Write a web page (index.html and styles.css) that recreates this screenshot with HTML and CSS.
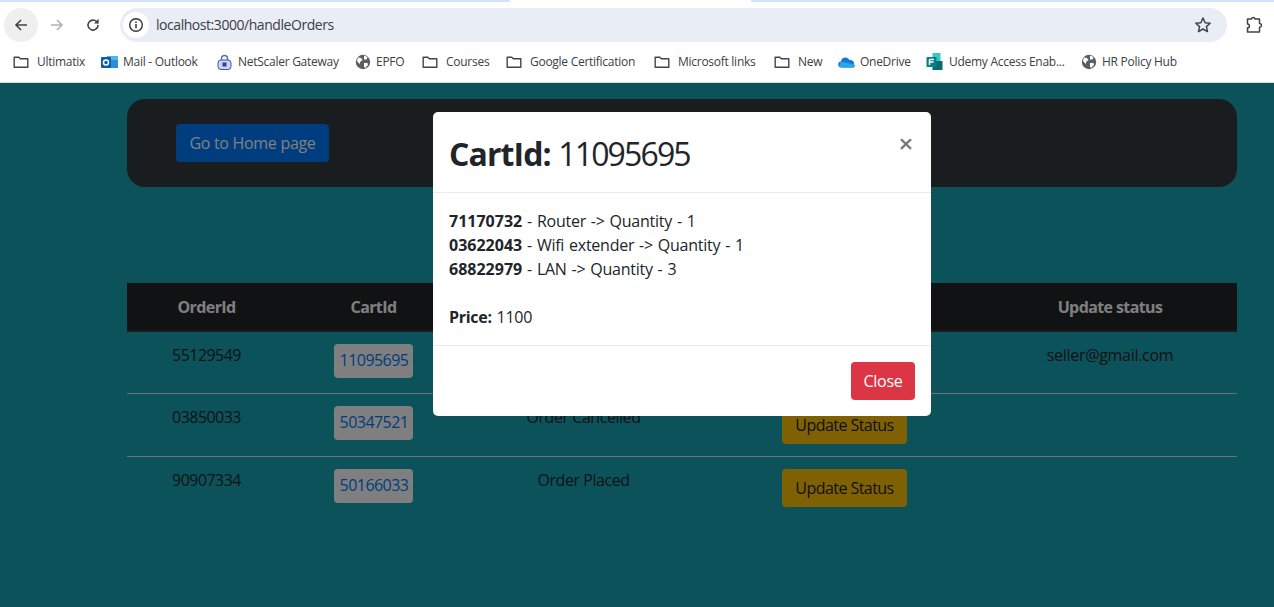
FILE: index.html
```html
<!DOCTYPE html>
<html>
	<head>
		<meta charset="UTF-8">
		<title>handleOrders</title>
		<link rel="stylesheet" href="styles.css">
	</head>
	<body>
		<svg class="defs" width="0" height="0">
			<symbol id="folder" viewBox="0 0 16 16">
				<path d="M1.2 3.2h4.6l1.6 1.6h7.4v8.4H1.2z" fill="none" stroke="#444" stroke-width="1.4" stroke-linejoin="round"/>
			</symbol>
			<symbol id="globe" viewBox="0 0 16 16">
				<circle cx="8" cy="8" r="7.2" fill="#5b5e63"/>
				<path d="M3 3.5l3 .5 1.5 2-2 1.5-1 2.5-2.5-3zM9 1.5l3.5 1.5-1 2.5H9zM9 9l3.5 0 .5 2-3 3-1-1.5z" fill="#fff"/>
			</symbol>
		</svg>

		<!--browser toolbar-->
		<div class="tabstrip"><span class="tabgap"></span></div>
		<div class="toolbar">
			<span class="navbtn navbtn-on">
				<svg width="16" height="16" viewBox="0 0 16 16"><path d="M14 8H3M8 3L3 8l5 5" fill="none" stroke="#444" stroke-width="1.6"/></svg>
			</span>
			<span class="navbtn">
				<svg width="16" height="16" viewBox="0 0 16 16"><path d="M2 8h11M8 3l5 5-5 5" fill="none" stroke="#b0b2b5" stroke-width="1.6"/></svg>
			</span>
			<span class="navbtn">
				<svg width="16" height="16" viewBox="0 0 16 16"><path d="M13 8a5 5 0 1 1-1.5-3.5L13 6" fill="none" stroke="#444" stroke-width="1.6"/><path d="M13.6 1.8v4.6H9z" fill="#444"/></svg>
			</span>
			<div class="omnibox">
				<span class="siteinfo">
					<svg width="16" height="16" viewBox="0 0 16 16"><circle cx="8" cy="8" r="6.3" fill="none" stroke="#333" stroke-width="1.4"/><path d="M8 7v4.2M8 4.6v1.4" stroke="#333" stroke-width="1.5"/></svg>
				</span>
				<span class="url">localhost:3000/handleOrders</span>
				<svg class="star" width="18" height="18" viewBox="0 0 18 18"><path d="M9 2l2.1 4.7 5.1.5-3.8 3.4 1.1 5L9 13l-4.5 2.6 1.1-5-3.8-3.4 5.1-.5z" fill="none" stroke="#444" stroke-width="1.5" stroke-linejoin="round"/></svg>
			</div>
			<svg class="puzzle" width="18" height="18" viewBox="0 0 18 18"><path d="M3.5 3H7.5a1.800 1.800 0 0 1 3.500 0H15.500v4.500a1.800 1.800 0 0 1 0 3.800V16H3.500v-4.200a1.900 1.900 0 0 0 0-3.800z" fill="none" stroke="#444" stroke-width="1.5" stroke-linejoin="round"/></svg>
		</div>

		<!--bookmarks-->
		<div class="bookmarks">
			<a class="mark m88"><svg width="16" height="16"><use href="#folder"/></svg>Ultimatix</a>
			<a class="mark m115 tight"><svg width="17" height="16" viewBox="0 0 17 16"><rect x="6" y="2" width="11" height="12" fill="#2a8fd8"/><rect x="6" y="2" width="11" height="4" fill="#50b4ee"/><rect x="0" y="3" width="10" height="11" rx="1" fill="#0c5fb0"/><circle cx="5" cy="8.500" r="2.500" fill="none" stroke="#fff" stroke-width="1.500"/></svg>Mail - Outlook</a>
			<a class="mark m139 tight"><svg width="17" height="16" viewBox="0 0 16 16"><path d="M5 7V4.500a3 3 0 0 1 6 0V7" fill="none" stroke="#5a6fb5" stroke-width="1.500"/><rect x="1.500" y="6" width="13" height="9.500" rx="3" fill="#c8d4f0" stroke="#3f56a3"/><rect x="6" y="8.500" width="4" height="4" fill="#2d4391"/></svg>NetScaler Gateway</a>
			<a class="mark m67 tight"><svg width="16" height="16"><use href="#globe"/></svg>EPFO</a>
			<a class="mark m84"><svg width="16" height="16"><use href="#folder"/></svg>Courses</a>
			<a class="mark m148"><svg width="16" height="16"><use href="#folder"/></svg>Google Certification</a>
			<a class="mark m120"><svg width="16" height="16"><use href="#folder"/></svg>Microsoft links</a>
			<a class="mark m64"><svg width="16" height="16"><use href="#folder"/></svg>New</a>
			<a class="mark m88 tight"><svg width="17" height="16" viewBox="0 0 17 16"><path d="M3.500 13.500a3 3 0 0 1-.5-6 4.500 4.500 0 0 1 8.500-1.500 3.800 3.800 0 0 1 4.500 4.500 2 2 0 0 1-.5 3z" fill="#1479d4"/><path d="M3.500 13.500a3 3 0 0 1 1-5.800L16 10.500a2 2 0 0 1-.5 3z" fill="#2ba4ec"/></svg>OneDrive</a>
			<a class="mark m155 tight"><svg width="18" height="18" viewBox="0 0 17 18"><rect x="6" y="0" width="8" height="8" fill="#37c6d0"/><rect x="6" y="8" width="10" height="9" fill="#0b6a70"/><rect x="0" y="4" width="10" height="10" rx="1" fill="#038387"/><path d="M3 6.500h4.500M3 9h4M3 6.500V12" stroke="#fff" stroke-width="1.500" fill="none"/></svg>Udemy Access Enab...</a>
			<a class="mark tight"><svg width="16" height="16"><use href="#globe"/></svg>HR Policy Hub</a>
		</div>

		<!--the app-->
		<div class="page">
			<div class="container">
				<div class="topnav">
					<button class="btn btn-home">Go to Home page</button>
				</div>
				<table class="orders">
					<colgroup>
						<col class="c1"><col class="c2"><col class="c3"><col class="c4"><col class="c5">
					</colgroup>
					<thead>
						<tr>
							<th>OrderId</th>
							<th>CartId</th>
							<th>Status</th>
							<th>Action</th>
							<th>Update status</th>
						</tr>
					</thead>
					<tbody>
						<tr>
							<td class="num">55129549</td>
							<td><a class="cartlink">11095695</a></td>
							<td class="status">Order Shipped</td>
							<td></td>
							<td>seller@gmail.com</td>
						</tr>
						<tr>
							<td class="num">03850033</td>
							<td><a class="cartlink">50347521</a></td>
							<td class="status">Order Cancelled</td>
							<td><button class="btn btn-update">Update Status</button></td>
							<td></td>
						</tr>
						<tr>
							<td class="num">90907334</td>
							<td><a class="cartlink">50166033</a></td>
							<td class="status">Order Placed</td>
							<td><button class="btn btn-update">Update Status</button></td>
							<td></td>
						</tr>
					</tbody>
				</table>
			</div>

			<!--modal-->
			<div class="backdrop">
				<div class="modal">
					<div class="modal-head">
						<h1><b>CartId:</b> <span class="cartno">11095695</span></h1>
						<span class="close">&times;</span>
					</div>
					<div class="modal-body">
						<b>71170732</b> - Router -&gt; Quantity - 1<br>
						<b>03622043</b> - Wifi extender -&gt; Quantity - 1<br>
						<b>68822979</b> - LAN -&gt; Quantity - 3<br>
						<br>
						<b class="price">Price:</b> 1100
					</div>
					<div class="modal-foot">
						<button class="btn btn-close">Close</button>
					</div>
				</div>
			</div>
		</div>
	</body>
</html>
```

FILE: styles.css
```css
* {
	margin: 0;
	padding: 0;
	box-sizing: border-box;
}
html, body {
	height: 100%;
	overflow: hidden;
}
body {
	display: flex;
	flex-direction: column;
	font-family: "Open Sans", "Noto Sans", sans-serif;
	font-size: 16px;
	line-height: 24px;
	letter-spacing: -0.3px;
	color: #212529;
	background: #fff;
}
.defs {
	position: absolute;
}
/*browser chrome*/
.tabstrip {
	height: 2px;
	flex: none;
	background: #d3e3fd;
	display: flex;
	padding-left: 510px;
}
.tabgap {
	width: 241px;
	background: #fff;
}
.toolbar {
	height: 40px;
	flex: none;
	padding: 6px 0 0 4px;
	display: flex;
	align-items: flex-start;
	background: #fff;
}
.navbtn {
	width: 34px;
	height: 34px;
	border-radius: 50%;
	margin-right: 2px;
	display: flex;
	align-items: center;
	justify-content: center;
}
.navbtn-on {
	background: #efefef;
}
.omnibox {
	width: 1107px;
	height: 34px;
	margin-left: 8px;
	border-radius: 17px;
	background: #e9edf6;
	display: flex;
	align-items: center;
	padding: 0 15px 0 3px;
}
.siteinfo {
	width: 26px;
	height: 26px;
	border-radius: 50%;
	background: #fff;
	display: flex;
	align-items: center;
	justify-content: center;
	margin-right: 7px;
}
.url {
	flex: 1;
	font-size: 14px;
	letter-spacing: -0.45px;
	color: #3c4043;
}
.puzzle {
	margin: 8px 0 0 17px;
}
.bookmarks {
	height: 41px;
	flex: none;
	display: flex;
	align-items: flex-start;
	padding: 11px 0 0 13px;
	font-size: 12px;
	line-height: 18px;
	letter-spacing: -0.27px;
	color: #3c4043;
	background: #fff;
	border-bottom: 1px solid #d8dade;
}
.mark {
	display: flex;
	align-items: center;
	gap: 8px;
	flex: none;
	white-space: nowrap;
}
.tight {
	gap: 5px;
}
.m64 { width: 64px; }
.m67 { width: 67px; }
.m84 { width: 84px; }
.m88 { width: 88px; }
.m115 { width: 115px; }
.m120 { width: 120px; }
.m139 { width: 139px; }
.m148 { width: 148px; }
.m155 { width: 155px; }

/*page*/
.page {
	flex: 1;
	position: relative;
	background: #16a4b6;
	padding: 16px 0 0 127px;
}
.container {
	width: 1110px;
}
.topnav {
	height: 88px;
	margin-bottom: 96px;
	padding: 25px 49px;
	background: #343a40;
	border-radius: 18px;
}
.btn {
	display: inline-block;
	height: 38px;
	border: 0;
	border-radius: 4px;
	font: inherit;
	letter-spacing: inherit;
	text-align: center;
}
.btn-home {
	width: 153px;
	background: #007bff;
	color: #fff;
}
.btn-update {
	width: 125px;
	margin-top: 1px;
	background: #ffc107;
	color: #212529;
	letter-spacing: -0.55px;
}
.btn-close {
	width: 64px;
	background: #dc3545;
	color: #fff;
}
.orders {
	width: 1110px;
	table-layout: fixed;
	border-collapse: collapse;
	text-align: center;
}
.c1 { width: 159px; }
.c2 { width: 175px; }
.c3 { width: 245px; }
.c4 { width: 277px; }
.c5 { width: 254px; }
.orders th {
	height: 48px;
	background: #212529;
	color: #fff;
	border-bottom: 2px solid #32383e;
	font-weight: 700;
	letter-spacing: -0.6px;
}
.orders td {
	padding: 11px 12px 12px;
	height: 62px;
	vertical-align: top;
	border-top: 1px solid #dee2e6;
}
.orders tbody tr:first-child td {
	border-top: 0;
}
.orders .num {
	letter-spacing: -0.55px;
}
.orders .status {
	letter-spacing: -0.45px;
}
.cartlink {
	display: block;
	width: 79px;
	height: 34px;
	margin: 1px auto 0;
	padding: 4px 0 0 1px;
	background: #fff;
	border-radius: 4px;
	color: #007bff;
	letter-spacing: -0.55px;
}
.backdrop {
	position: absolute;
	inset: 0;
	background: rgba(0, 0, 0, .5);
	padding: 29px 0 0 433px;
}
.modal {
	width: 498px;
	height: 304px;
	background: #fff;
	border-radius: 5px;
}
.modal-head {
	height: 81px;
	padding: 18px 16px 0;
	display: flex;
	justify-content: space-between;
	border-bottom: 1px solid #e9ecef;
}
.modal-head h1 {
	font-size: 32px;
	line-height: 48px;
	font-weight: 400;
	letter-spacing: -0.9px;
}
.cartno {
	letter-spacing: -1.85px;
}
.close {
	font-size: 26px;
	line-height: 26px;
	font-weight: 600;
	color: #777;
	margin-right: 2px;
}
.modal-body {
	height: 152px;
	padding: 16px;
	letter-spacing: -0.25px;
	word-spacing: 1px;
}
.modal-body b {
	letter-spacing: 0;
}
.modal-body .price {
	letter-spacing: -0.3px;
}
.modal-foot {
	padding: 16px;
	display: flex;
	justify-content: flex-end;
	border-top: 1px solid #e9ecef;
}
```
